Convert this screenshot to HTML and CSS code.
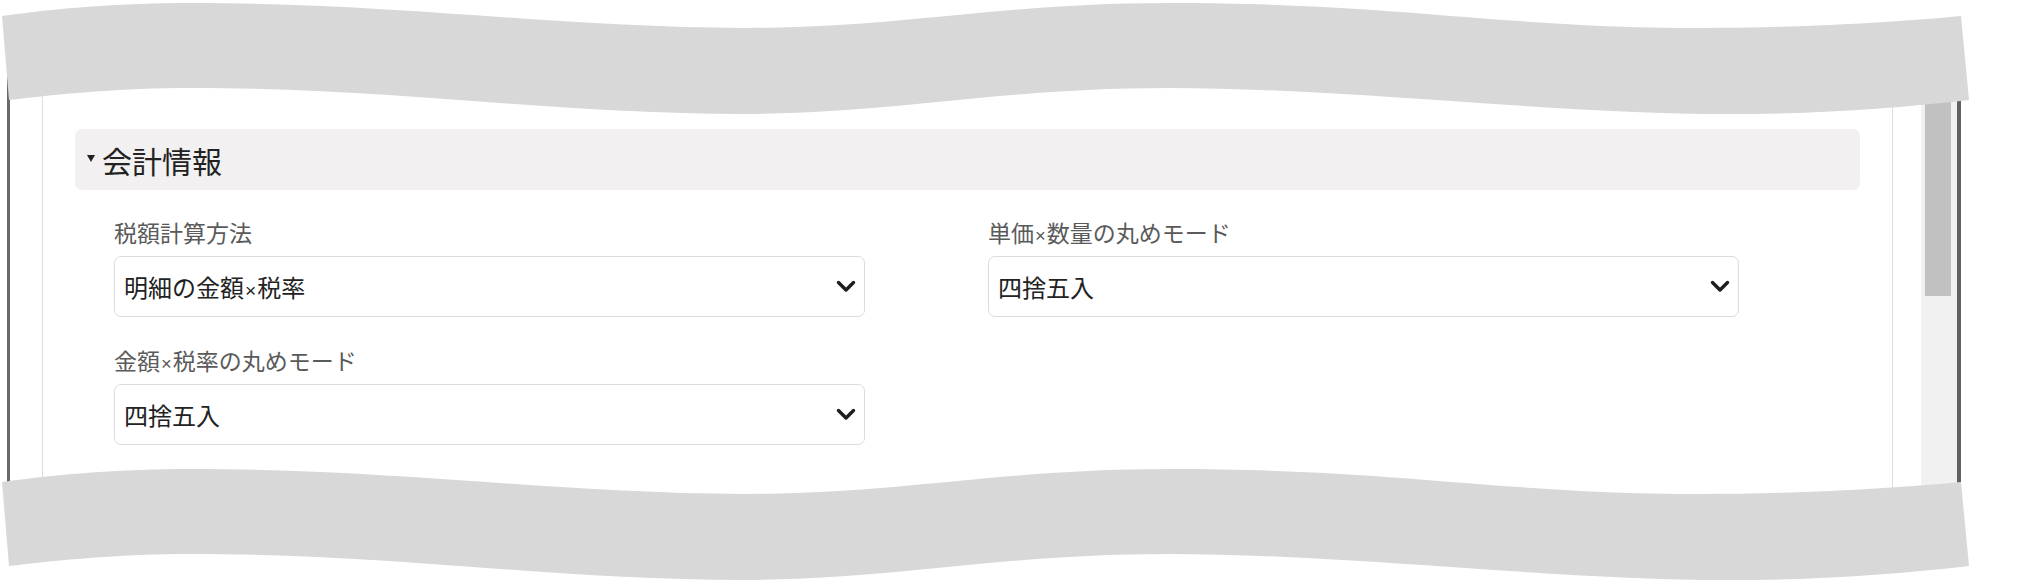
FILE: index.html
```html
<!DOCTYPE html>
<html lang="ja">
<head>
<meta charset="utf-8">
<title>会計情報</title>
<link rel="stylesheet" href="styles.css">
</head>
<body>
<div class="window">
  <div class="content">
    <div class="panel">
      <div class="section-header">
        <span class="caret"></span>
        <span class="section-title">会計情報</span>
      </div>
      <div class="fields">
        <div class="field">
          <div class="label">税額計算方法</div>
          <div class="select">
            <span class="select-text">明細の金額<span class="times">×</span>税率</span>
            <svg class="chevron" width="20" height="13" viewBox="0 0 20 13"><path d="M2.5 2.5 L10 10 L17.5 2.5" /></svg>
          </div>
        </div>
        <div class="field">
          <div class="label">単価<span class="times">×</span>数量の丸めモード</div>
          <div class="select">
            <span class="select-text">四捨五入</span>
            <svg class="chevron" width="20" height="13" viewBox="0 0 20 13"><path d="M2.5 2.5 L10 10 L17.5 2.5" /></svg>
          </div>
        </div>
        <div class="field">
          <div class="label">金額<span class="times">×</span>税率の丸めモード</div>
          <div class="select">
            <span class="select-text">四捨五入</span>
            <svg class="chevron" width="20" height="13" viewBox="0 0 20 13"><path d="M2.5 2.5 L10 10 L17.5 2.5" /></svg>
          </div>
        </div>
      </div>
    </div>
  </div>
  <div class="scrollbar"><div class="thumb"></div></div>
</div>
<svg class="torn" width="2027" height="587" viewBox="0 0 2027 587">
  <path class="band" d="M2 16 C60 8 120 3 192 3 C400 3 550 27 745 28 C900 28 1000 3 1169 3 C1400 3 1500 28 1700 28 C1800 28 1900 22 1961 16 L1969 100 C1900 108 1820 114 1730 114 C1550 114 1350 88 1169 88 C1000 88 900 113 745 114 C550 114 400 88 192 88 C120 88 60 94 9 100 Z"/>
  <path class="band" transform="translate(0 466)" d="M2 16 C60 8 120 3 192 3 C400 3 550 27 745 28 C900 28 1000 3 1169 3 C1400 3 1500 28 1700 28 C1800 28 1900 22 1961 16 L1969 100 C1900 108 1820 114 1730 114 C1550 114 1350 88 1169 88 C1000 88 900 113 745 114 C550 114 400 88 192 88 C120 88 60 94 9 100 Z"/>
</svg>
</body>
</html>
```

FILE: styles.css
```css
html, body {
  margin: 0;
  padding: 0;
  background: #ffffff;
}

body {
  position: relative;
  width: 2027px;
  height: 587px;
  overflow: hidden;
  font-family: "Noto Sans CJK JP", "Noto Sans", sans-serif;
  color: #222222;
}

.window {
  display: flex;
  margin: 40px 0 0 7px;
  width: 1954px;
  height: 480px;
  box-sizing: border-box;
  border-left: 3px solid #6a6a6a;
  border-right: 4px solid #616161;
  background: #ffffff;
}

.content {
  flex: 1;
  display: flex;
  padding: 0 28px 0 32px;
}

.panel {
  flex: 1;
  border-left: 1px solid #dedede;
  border-right: 1px solid #dedede;
  padding: 89px 32px 0 32px;
}

.section-header {
  display: flex;
  align-items: center;
  height: 61px;
  padding-left: 12px;
  background: #f2f0f1;
  border-radius: 7px;
}

.caret {
  width: 0;
  height: 0;
  border-left: 4.5px solid transparent;
  border-right: 4.5px solid transparent;
  border-top: 7px solid #222222;
  margin-right: 7px;
  margin-bottom: 3px;
}

.section-title {
  font-size: 30px;
  line-height: 1;
  color: #222222;
}

.fields {
  display: grid;
  grid-template-columns: 751px 751px;
  column-gap: 123px;
  row-gap: 27px;
  margin: 26px 0 0 39px;
}

.field {
  display: flex;
  flex-direction: column;
  gap: 7px;
}

.label {
  height: 33px;
  font-size: 23px;
  line-height: 33px;
  color: #5a5a5a;
  overflow: visible;
}

.times {
  font-family: "Liberation Sans", sans-serif;
  font-size: 0.8em;
  line-height: 0;
  margin: 0 1px;
}

.select {
  display: flex;
  align-items: center;
  justify-content: space-between;
  height: 61px;
  box-sizing: border-box;
  padding: 0 8px 0 9px;
  border: 1px solid #dcdcdc;
  border-radius: 7px;
  background: #ffffff;
}

.select-text {
  font-size: 24px;
  line-height: 1;
  color: #222222;
}

.chevron path {
  fill: none;
  stroke: #1e1e1e;
  stroke-width: 3.4;
  stroke-linecap: round;
  stroke-linejoin: round;
}

.scrollbar {
  width: 36px;
  background: #f1f1f1;
  padding: 0 6px 0 4px;
  box-sizing: border-box;
}

.thumb {
  height: 256px;
  background: #c1c1c1;
}

.torn {
  position: absolute;
  left: 0;
  top: 0;
  pointer-events: none;
}

.band {
  fill: #d8d8d8;
}
```
